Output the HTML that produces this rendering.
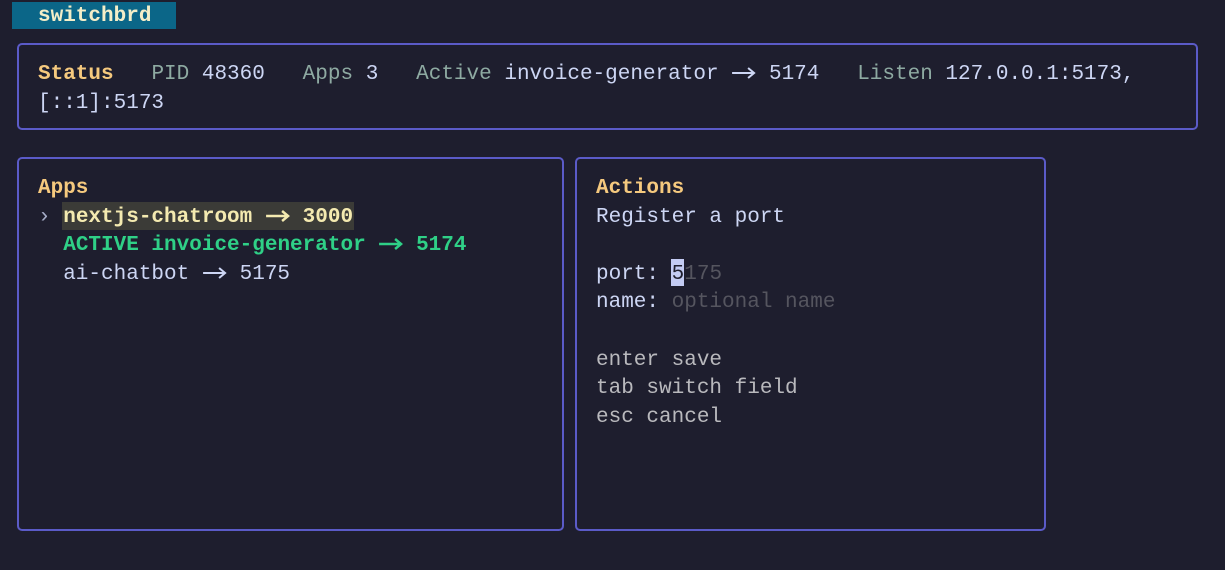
<!DOCTYPE html>
<html><head><meta charset="utf-8"><style>
html,body{margin:0;padding:0;background:#1e1e2e;width:1225px;height:570px;overflow:hidden}
body{position:relative;font-family:"Liberation Mono",monospace;font-size:21px;color:#cdd6f4}
.box{position:absolute;border:2px solid #5b5bc8;border-radius:5px;box-sizing:border-box}
.t{position:absolute;white-space:pre;line-height:28.6px}
.y{color:#f5c97e;font-weight:bold}
.l{color:#8eaaa2}
.g{color:#2fd087;font-weight:bold}
.d{color:#55555f}
.h{color:#b9b9bd}
.a{display:inline-block;width:25.2px;height:14px;vertical-align:-1px}
</style></head><body>
<div style="position:absolute;left:12px;top:2px;width:164px;height:27px;background:#0b6688"></div>
<div class="t" style="left:38px;top:3px;color:#f4eec8;font-weight:bold">switchbrd</div>
<div class="box" style="left:17px;top:43px;width:1181px;height:87px"></div>
<div class="t" style="left:38px;top:61px"><span class="y">Status</span>   <span class="l">PID</span> 48360   <span class="l">Apps</span> 3   <span class="l">Active</span> invoice-generator <svg class="a" viewBox="0 0 25 14"><path d="M1 7H23M17 2L23 7L17 12" fill="none" stroke="currentColor" stroke-width="2"/></svg> 5174   <span class="l">Listen</span> 127.0.0.1:5173,
[::1]:5173</div>
<div class="box" style="left:17px;top:157px;width:547px;height:374px"></div>
<div style="position:absolute;left:62px;top:202px;width:292px;height:28px;background:#3b3b37"></div>
<div class="t" style="left:38px;top:175px"><span class="y">Apps</span>
<span style="color:#a6adc8">›</span> <span style="color:#f4eab0;font-weight:bold">nextjs-chatroom <svg class="a" viewBox="0 0 25 14"><path d="M1 7H23M17 2L23 7L17 12" fill="none" stroke="currentColor" stroke-width="2.5"/></svg> 3000</span>
  <span class="g">ACTIVE invoice-generator <svg class="a" viewBox="0 0 25 14"><path d="M1 7H23M17 2L23 7L17 12" fill="none" stroke="currentColor" stroke-width="2.5"/></svg> 5174</span>
  ai-chatbot <svg class="a" viewBox="0 0 25 14"><path d="M1 7H23M17 2L23 7L17 12" fill="none" stroke="currentColor" stroke-width="2"/></svg> 5175</div>
<div class="box" style="left:575px;top:157px;width:471px;height:374px"></div>
<div style="position:absolute;left:671px;top:259px;width:13px;height:27px;background:#c3cbf3"></div>
<div class="t" style="left:596px;top:175px"><span class="y">Actions</span>
Register a port

port: <span style="color:#1e1e2e">5</span><span class="d">175</span>
name: <span class="d">optional name</span>

<span class="h">enter save
tab switch field
esc cancel</span></div>
</body></html>
